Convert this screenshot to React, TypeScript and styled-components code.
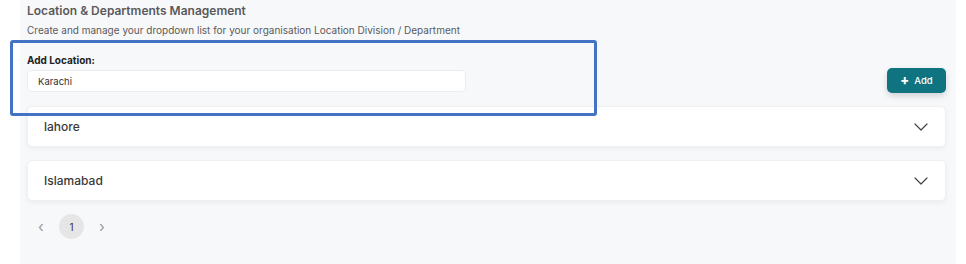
import React, { FC } from 'react';
import styled, { createGlobalStyle } from 'styled-components';

const palette = {
  panel: '#f7f8fa',
  text: '#3a3a3a',
  muted: '#5a5a5a',
  teal: '#0f7380',
  annotate: '#4472c4',
  border: '#ebedf0',
};

const GlobalStyle = createGlobalStyle`
  html, body {
    margin: 0;
    padding: 0;
    background: #fff;
    font-family: 'Inter', 'Noto Sans', sans-serif;
  }
`;

const locations = ['lahore', 'Islamabad'];

const Chevron: FC = () => (
  <svg width="14" height="8" viewBox="0 0 14 8" fill="none">
    <polyline points="1,1 7,7 13,1" stroke="#444" strokeWidth="1.2" strokeLinecap="round" strokeLinejoin="round" />
  </svg>
);

const App: FC = () => {
  return (
    <>
      <GlobalStyle />
      <Page>
        <Panel>
          <Title>Location &amp; Departments Management</Title>
          <SubTitle>Create and manage your dropdown list for your organisation Location Division / Department</SubTitle>

          <FormRow>
            <Field>
              <Label>Add Location:</Label>
              <StyledInput type="text" defaultValue="Karachi" />
            </Field>
            <AddButton>
              <span>+</span> Add
            </AddButton>
          </FormRow>

          <List>
            {locations.map((name) => (
              <Card key={name}>
                <CardTitle>{name}</CardTitle>
                <Chevron />
              </Card>
            ))}
          </List>

          <Pagination>
            <PageArrow>‹</PageArrow>
            <PageNumber active>1</PageNumber>
            <PageArrow>›</PageArrow>
          </Pagination>

          <Annotation />
        </Panel>
      </Page>
    </>
  );
};

const Page = styled.div`
  padding: 0 10px 0 20px;
`;

const Panel = styled.div`
  position: relative;
  height: 264px;
  box-sizing: border-box;
  padding: 3px 10px 0 7px;
  background: ${palette.panel};
`;

const Title = styled.h2`
  margin: 0;
  font-size: 12px;
  line-height: 16px;
  font-weight: 600;
  color: ${palette.muted};
`;

const SubTitle = styled.p`
  margin: 3px 0 0;
  font-size: 10px;
  line-height: 16px;
  color: ${palette.muted};
`;

const FormRow = styled.div`
  display: flex;
  align-items: flex-end;
  justify-content: space-between;
  margin-top: 15px;
`;

const Field = styled.div`
  display: flex;
  flex-direction: column;
  gap: 3px;
`;

const Label = styled.label`
  font-size: 10px;
  line-height: 14px;
  font-weight: 700;
  color: #222;
`;

const StyledInput = styled.input`
  width: 439px;
  height: 22px;
  box-sizing: border-box;
  padding: 0 10px;
  font-family: inherit;
  font-size: 9.5px;
  color: #333;
  background: #fff;
  border: 1px solid ${palette.border};
  border-radius: 4px;
  outline: none;
`;

const AddButton = styled.button`
  width: 59px;
  height: 25px;
  margin-bottom: -1px;
  display: flex;
  align-items: center;
  justify-content: center;
  gap: 5px;
  font-family: inherit;
  font-size: 9.5px;
  font-weight: 500;
  color: #fff;
  background: ${palette.teal};
  border: none;
  border-radius: 5px;
  box-shadow: 0 3px 6px rgba(0, 0, 0, 0.15);

  & > span {
    font-size: 13px;
    font-weight: 800;
    line-height: 1;
  }
`;

const List = styled.div`
  display: flex;
  flex-direction: column;
  gap: 13px;
  margin-top: 14px;
`;

const Card = styled.div`
  height: 41px;
  box-sizing: border-box;
  display: flex;
  align-items: center;
  justify-content: space-between;
  padding: 0 17px 0 16px;
  background: #fff;
  border: 1px solid #eef0f2;
  border-radius: 5px;
  box-shadow: 0 2px 4px rgba(0, 0, 0, 0.05);
`;

const CardTitle = styled.span`
  font-size: 12px;
  font-weight: 500;
  color: ${palette.text};
`;

const Pagination = styled.div`
  display: flex;
  align-items: center;
  gap: 14px;
  margin-top: 13px;
  padding-left: 10px;
`;

const PageArrow = styled.span`
  width: 8px;
  text-align: center;
  font-size: 15px;
  line-height: 1;
  color: #9a9a9a;
`;

const PageNumber = styled.span<{ active?: boolean }>`
  width: 25px;
  height: 25px;
  display: flex;
  align-items: center;
  justify-content: center;
  border-radius: 50%;
  font-size: 10px;
  color: #333;
  background: ${(props) => (props.active ? '#e6e6e6' : 'transparent')};
`;

const Annotation = styled.div`
  position: absolute;
  left: -10px;
  top: 40px;
  width: 587px;
  height: 76px;
  box-sizing: border-box;
  border: 3px solid ${palette.annotate};
  border-radius: 3px;
  pointer-events: none;
`;

export default App;
